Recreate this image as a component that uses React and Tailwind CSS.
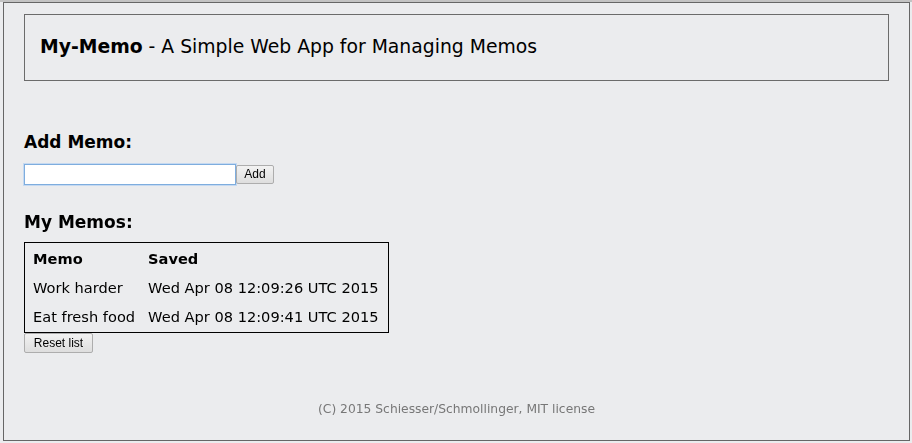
import { useState } from 'react';

export default function App() {
  const [memo, setMemo] = useState('');
  const [memos, setMemos] = useState([
    { text: 'Work harder', saved: 'Wed Apr 08 12:09:26 UTC 2015' },
    { text: 'Eat fresh food', saved: 'Wed Apr 08 12:09:41 UTC 2015' }
  ]);

  const addMemo = () => {
    if (!memo.trim()) return;
    setMemos(prev => [...prev, { text: memo, saved: new Date().toUTCString() }]);
    setMemo('');
  };

  return (
    <div className="w-[912px] h-[443px] bg-[#ebecee] overflow-hidden font-['DejaVu_Sans',Verdana,sans-serif] text-black">
      <div className="h-[2px] bg-[#c3c3c3]" />
      <div className="ml-[3px] w-[907px] h-[439px] border border-[#666]">
        <div className="ml-[20px] mt-[11px] w-[865px] h-[67px] border border-[#6b6b6b] flex items-center pl-[15px] pb-[1px]">
          <h1 className="text-[18.8px] leading-[24px]">
            <span className="font-bold">My-Memo</span> - A Simple Web App for Managing Memos
          </h1>
        </div>

        <div className="pl-[20px]">
          <h3 className="mt-[51px] text-[17px] leading-[20px] font-bold">Add Memo:</h3>
          <div className="mt-[12px] flex items-start">
            <input
              autoFocus
              value={memo}
              onChange={(e) => setMemo(e.target.value)}
              className="w-[212px] h-[21px] bg-white border border-[#7eadde] shadow-[0_0_0_1px_#c5d9f1] outline-none px-[2px] text-[13px]"
            />
            <button
              onClick={addMemo}
              className="mt-[1px] h-[19px] w-[38px] border border-[#adadad] rounded-[2px] bg-gradient-to-b from-[#f2f2f2] to-[#dedede] text-[12px] leading-[17px] font-['Liberation_Sans',Arial,sans-serif]"
            >
              Add
            </button>
          </div>

          <h3 className="mt-[27px] text-[17px] leading-[20px] font-bold">My Memos:</h3>
          <table className="mt-[10px] border border-black border-separate border-spacing-[2px] text-[14.6px] leading-[17px]">
            <thead>
              <tr>
                <th className="text-left font-bold pl-[6px] pr-[5px] py-[5px]">Memo</th>
                <th className="text-left font-bold pl-[6px] pr-[7px] py-[5px]">Saved</th>
              </tr>
            </thead>
            <tbody>
              {memos.map((m, i) => (
                <tr key={i}>
                  <td className="pl-[6px] pr-[5px] py-[5px] whitespace-nowrap">{m.text}</td>
                  <td className="pl-[6px] pr-[7px] py-[5px] whitespace-nowrap">{m.saved}</td>
                </tr>
              ))}
            </tbody>
          </table>
          <button
            onClick={() => setMemos([])}
            className="block h-[20px] w-[69px] border border-[#adadad] rounded-[2px] bg-gradient-to-b from-[#f2f2f2] to-[#dedede] text-[12px] leading-[18px] font-['Liberation_Sans',Arial,sans-serif]"
          >
            Reset list
          </button>
        </div>

        <p className="mt-[48px] text-center text-[12.3px] leading-[16px] text-[#777]">
          (C) 2015 Schiesser/Schmollinger, MIT license
        </p>
      </div>
    </div>
  );
}
